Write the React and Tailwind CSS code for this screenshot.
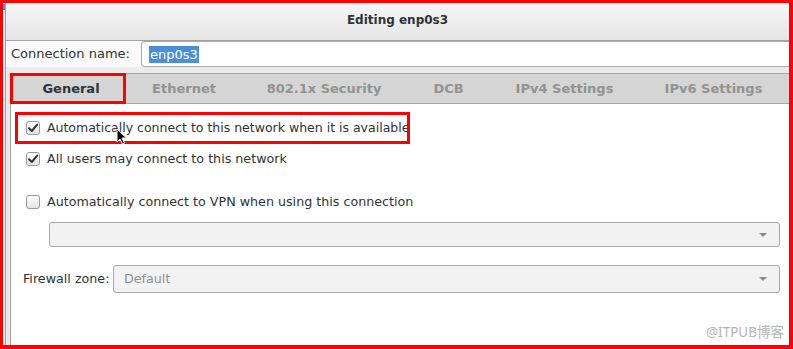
import React from "react";

const font = { fontFamily: '"DejaVu Sans", "Noto Sans CJK SC", sans-serif' };

function CheckBox({ checked }) {
  return (
    <div className="w-[14px] h-[14px] rounded-[3px] border border-[#9a9a9a] bg-gradient-to-b from-[#ffffff] to-[#e4e4e4] flex items-center justify-center shrink-0">
      {checked && (
        <svg width="12" height="12" viewBox="0 0 12 12">
          <path d="M2 6.2 L4.8 9 L10.2 2.6" fill="none" stroke="#2e3436" strokeWidth="2" strokeLinecap="round" strokeLinejoin="round" />
        </svg>
      )}
    </div>
  );
}

function Arrow() {
  return (
    <svg width="10" height="6" viewBox="0 0 10 6">
      <path d="M1 1 L9 1 L5 5 Z" fill="#8a8a8a" />
    </svg>
  );
}

const tabs = [
  { label: "General", w: "w-[112px]", active: true },
  { label: "Ethernet", w: "w-[114px]" },
  { label: "802.1x Security", w: "w-[166px]" },
  { label: "DCB", w: "w-[83px]" },
  { label: "IPv4 Settings", w: "w-[149px]" },
  { label: "IPv6 Settings", w: "w-[149px]" },
];

export default function App() {
  return (
    <div style={font} className="w-[793px] h-[349px] relative overflow-hidden bg-white border-t-[3px] border-l-[3px] border-r-4 border-b-4 border-[#ff0000] text-[13px] text-[#2e3436]">
      <div className="absolute left-0 top-[1px] w-[2px] h-[6px] bg-[#4a90d9]" />
      <div className="h-full ml-[2px] border-l border-[#a0a0a0] flex flex-col">
        {/* header */}
        <div className="h-[38px] shrink-0 bg-gradient-to-b from-[#f6f6f6] to-[#e6e6e6] border-b border-[#a3a3a3] flex justify-center pt-[8px] font-bold text-[12px]">
          Editing enp0s3
        </div>
        <div className="flex-1 flex flex-col bg-[#fafafa]">
          {/* connection name row */}
          <div className="h-[26px] flex items-center pl-[5px]">
            <span className="w-[130px] shrink-0">Connection name:</span>
            <div className="h-[26px] flex-1 -mr-[10px] rounded-[3px] border border-[#a8a8a8] bg-white flex items-center pl-[7px]">
              <span className="bg-[#4a90d9] text-white leading-[17px] px-[1px]">enp0s3</span>
            </div>
          </div>
          <div className="h-[6px] bg-[#ebebeb] mt-[0px]" />
          {/* body */}
          <div className="flex-1 flex bg-[#ebebeb]">
            <div className="w-[4px] shrink-0" />
            <div className="flex-1 flex flex-col">
              {/* tab bar */}
              <div className="h-[31px] shrink-0 bg-[#d5d5d5] border-t border-b border-[#a6a6a6] flex pl-[5px] font-bold">
                {tabs.map((t) => (
                  <div key={t.label} className={`${t.w} shrink-0 flex items-center justify-center relative ${t.active ? "text-[#2e3436]" : "text-[#929292]"}`}>
                    {t.label}
                    {t.active && (
                      <div className="absolute left-[-5px] right-[1px] top-[-1px] bottom-[-1px] border-[3px] border-[#ff0000]" />
                    )}
                  </div>
                ))}
              </div>
              {/* content */}
              <div className="flex-1 bg-white border-l border-[#a0a0a0] flex flex-col pl-[15px] relative text-[12.7px]">
                <div className="h-[8px]" />
                <div className="h-[32px] flex items-center gap-[7px] relative">
                  <CheckBox checked />
                  <span className="text-[12.5px]">Automatically connect to this network when it is available</span>
                  <div className="absolute left-[-11px] top-0 w-[395px] h-[32px] border-[3px] border-[#ff0000]" />
                  <svg className="absolute left-[90px] top-[16px]" width="12" height="17" viewBox="0 0 12 17">
                    <path d="M1 1 L1 14 L4 11 L6.5 16 L8.5 15 L6 10 L10.5 10 Z" fill="#000" stroke="#fff" strokeWidth="1" />
                  </svg>
                </div>
                <div className="h-[29px] flex items-center gap-[7px]">
                  <CheckBox checked />
                  <span>All users may connect to this network</span>
                </div>
                <div className="h-[15px]" />
                <div className="h-[28px] flex items-center gap-[7px]">
                  <CheckBox />
                  <span>Automatically connect to VPN when using this connection</span>
                </div>
                <div className="h-[6px]" />
                <div className="ml-[23px] mr-[9px] h-[25px] rounded-[3px] border border-[#a8a8a8] bg-[#f2f2f2] flex items-center justify-end pr-[11px]">
                  <Arrow />
                </div>
                <div className="h-[18px]" />
                <div className="flex items-center -ml-[3px] mr-[9px]">
                  <span className="w-[90px] shrink-0">Firewall zone:</span>
                  <div className="flex-1 h-[28px] rounded-[3px] border border-[#a8a8a8] bg-[#f2f2f2] flex items-center justify-between pl-[10px] pr-[11px] text-[#909090]">
                    <span>Default</span>
                    <Arrow />
                  </div>
                </div>
                <div className="absolute right-[5px] bottom-[3px] text-[#b4b4b4] text-[13.5px]" style={{ fontFamily: '"Noto Sans", "Noto Sans CJK SC", sans-serif' }}>
                  @ITPUB博客
                </div>
              </div>
            </div>
          </div>
        </div>
      </div>
    </div>
  );
}
